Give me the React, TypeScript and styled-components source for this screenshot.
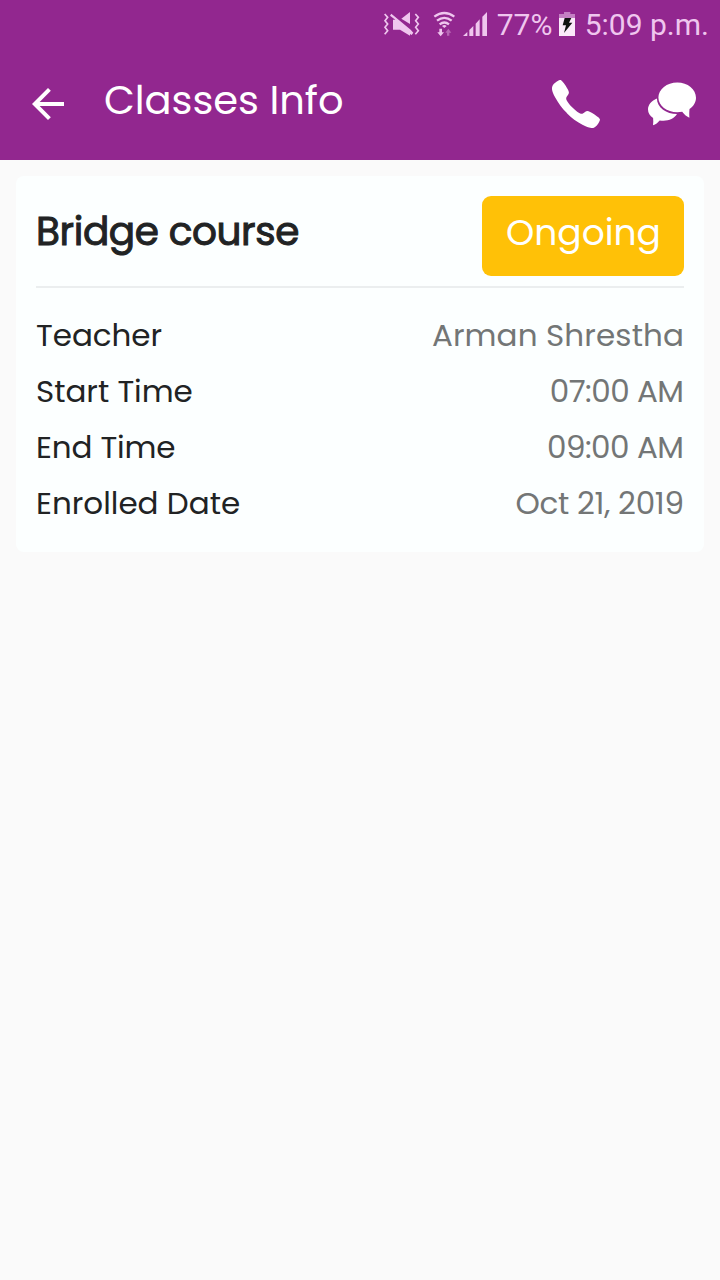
import React from 'react';
import styled, { createGlobalStyle } from 'styled-components';
import { IoIosCall } from 'react-icons/io';
import { MdArrowBack } from 'react-icons/md';

const GlobalStyle = createGlobalStyle`
  * { box-sizing: border-box; }
  body {
    margin: 0;
    background: #fafafa;
    font-family: Poppins, Inter, 'Open Sans', sans-serif;
  }
`;

const Screen = styled.div`
  display: flex;
  flex-direction: column;
  min-height: 1280px;
  background: #fafafa;
`;

const TopArea = styled.header`
  background: #92278f;
  color: #fff;
`;

const StatusBar = styled.div`
  display: flex;
  justify-content: flex-end;
  height: 48px;
  padding-right: 11px;
  color: #efc6ee;
  font: 400 30px/50px Roboto, sans-serif;
  white-space: nowrap;
`;

const StatusIcon = styled.svg<{ $width: number; $right: number }>`
  flex: none;
  width: ${(p) => p.$width}px;
  height: 28px;
  margin: 10px ${(p) => p.$right}px 0 0;
`;

const Percent = styled.span`
  width: 61px;
`;

const AppBar = styled.div`
  display: flex;
  align-items: center;
  height: 112px;
  padding: 0 24px;
`;

const BackIcon = styled(MdArrowBack)`
  width: 48px;
  height: 48px;
`;

const Title = styled.h1`
  flex: 1;
  align-self: flex-start;
  margin: 0 0 0 32px;
  font-size: 40px;
  font-weight: 400;
  line-height: 105px;
  letter-spacing: -0.05px;
`;

const CallIcon = styled(IoIosCall)`
  width: 64px;
  height: 64px;
  margin-right: 40px;
`;

const ChatIcon = styled.svg`
  width: 48px;
  height: 48px;
`;

const Card = styled.section`
  margin: 16px;
  padding: 20px 20px 21px;
  border-radius: 8px;
  background: #fcffff;
`;

const CardHeader = styled.div`
  display: flex;
  justify-content: space-between;
  align-items: flex-start;
  padding-bottom: 10px;
  border-bottom: 2px solid #ebeeef;
`;

const CourseName = styled.h2`
  margin: 0;
  color: #212324;
  font-size: 39px;
  font-weight: 400;
  line-height: 72px;
  letter-spacing: -0.39px;
  -webkit-text-stroke: 1px #212324;
`;

const StatusButton = styled.button`
  width: 202px;
  height: 80px;
  padding: 0 0 6px 24px;
  border: 0;
  border-radius: 9px;
  background: #ffc107;
  color: #fff;
  font: inherit;
  font-size: 36px;
  line-height: 74px;
  text-align: left;
`;

const Details = styled.dl`
  margin: 19px 0 0;
`;

const DetailRow = styled.div`
  display: flex;
  justify-content: space-between;
  height: 56px;
  font-size: 31px;
  line-height: 56px;
`;

const Label = styled.dt<{ $track: number }>`
  color: #212324;
  letter-spacing: ${(p) => p.$track}px;
`;

const Value = styled.dd<{ $track: number }>`
  margin: 0 ${(p) => -p.$track}px 0 0;
  color: #737676;
  letter-spacing: ${(p) => p.$track}px;
`;

const details = [
  { label: 'Teacher', labelTrack: -0.05, value: 'Arman Shrestha', valueTrack: 0.12 },
  { label: 'Start Time', labelTrack: -0.03, value: '07:00 AM', valueTrack: -0.5 },
  { label: 'End Time', labelTrack: -0.14, value: '09:00 AM', valueTrack: -0.47 },
  { label: 'Enrolled Date', labelTrack: 0, value: 'Oct 21, 2019', valueTrack: -0.28 },
];

function VibrateIcon() {
  return (
    <StatusIcon viewBox="21 30 114 84" $width={38} $right={12} fill="currentColor">
      <g fill="none" stroke="currentColor" strokeWidth="5">
        <path d="M26 42l9 10-8 10 8 10-8 10 8 10-9 11" />
        <path d="M118 42l9 10-8 10 8 10-8 10 8 10-9 11" />
      </g>
      <path d="M102 36v36L76 56z" />
      <path d="M46 41l58 48 8 9-5 7-5-3v5L72 89H51V59h7L42 47z" />
    </StatusIcon>
  );
}

function WifiIcon() {
  return (
    <StatusIcon viewBox="171 30 66 84" $width={22} $right={7} fill="currentColor">
      <g fill="none" stroke="currentColor" strokeWidth="7">
        <path d="M175 50Q205 28 235 50" />
        <path d="M183 62Q205 45 227 62" />
        <path d="M191 73Q205 62 219 73" />
      </g>
      <path d="M198 78Q205 72 212 78L205 84z" />
      <path d="M190 86h8v11h6l-10 12-10-12h6z" />
      <path d="M213 107h7V98h6l-9-12-9 12h5z" opacity=".4" />
    </StatusIcon>
  );
}

function SignalIcon() {
  return (
    <StatusIcon viewBox="258 30 78 84" $width={26} $right={9} fill="currentColor">
      <path d="M261 108l13-12v12zM280 90l12-12v30h-12zM299 71l12-13v50h-12zM319 50l14-14v72h-14z" />
    </StatusIcon>
  );
}

function BatteryIcon() {
  return (
    <StatusIcon viewBox="204 30 54 84" $width={18} $right={9}>
      <path d="M207 55V42h15v-6h19v6h14v13z" fill="#c47fc3" />
      <path d="M207 54h48v54h-48z" fill="#fbe9fa" />
      <path d="M224 54h20l-7 14h10l-25 31 6-23h-10z" fill="#111" />
    </StatusIcon>
  );
}

export default function App() {
  return (
    <Screen>
      <GlobalStyle />
      <TopArea>
        <StatusBar>
          <VibrateIcon />
          <WifiIcon />
          <SignalIcon />
          <Percent>77%</Percent>
          <BatteryIcon />
          <span>5:09 p.m.</span>
        </StatusBar>
        <AppBar>
          <BackIcon />
          <Title>Classes Info</Title>
          <CallIcon />
          <ChatIcon viewBox="0 0 48 48" fill="#fff">
            <path d="M8.900 18.400C3.500 20.600 0 24.800 0 29.500c0 3.300 1.900 6.300 5.100 8.500.3 2.600.2 4.800-.1 7.300 2.800-1 4.700-2.600 6.700-4.900 7.300 1.300 14.300-1.300 17.300-6.400C18.500 34 9 27.500 8.900 18.400z" />
            <path d="M29.300 2.400C39.700 2.400 48 9.200 48 17.800c0 4.600-2.400 8.500-6.500 11.300-.3 3-.3 5.400-.1 8.700-3.200-1.400-5.300-3.600-7.200-6-1.600.3-3.200.5-4.900.5C18.800 32.300 10.400 26 10.400 17.600 10.400 9.200 18.800 2.400 29.300 2.400z" />
          </ChatIcon>
        </AppBar>
      </TopArea>
      <Card>
        <CardHeader>
          <CourseName>Bridge course</CourseName>
          <StatusButton>Ongoing</StatusButton>
        </CardHeader>
        <Details>
          {details.map((d) => (
            <DetailRow key={d.label}>
              <Label $track={d.labelTrack}>{d.label}</Label>
              <Value $track={d.valueTrack}>{d.value}</Value>
            </DetailRow>
          ))}
        </Details>
      </Card>
    </Screen>
  );
}
